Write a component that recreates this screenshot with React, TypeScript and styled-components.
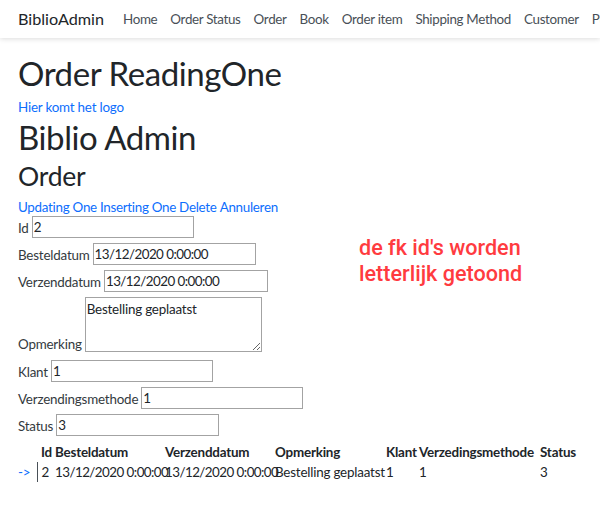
import styled, { createGlobalStyle } from 'styled-components';

const GlobalStyle = createGlobalStyle`
  html, body {
    margin: 0;
    padding: 0;
    width: 600px;
    height: 508px;
    overflow: hidden;
    background: #fff;
  }
  body {
    font-family: Lato, 'Noto Sans', sans-serif;
    font-size: 13.4px;
    letter-spacing: -0.2px;
    line-height: 20px;
    color: #212529;
  }
`;

const navLinks = ['Home', 'Order Status', 'Order', 'Book', 'Order item', 'Shipping Method', 'Customer', 'Publisher'];

const fields = [
  { label: 'Id', value: '2', width: 162, date: false },
  { label: 'Besteldatum', value: '13/12/2020 0:00:00', width: 163, date: true },
  { label: 'Verzenddatum', value: '13/12/2020 0:00:00', width: 164, date: true },
];

const lowerFields = [
  { label: 'Klant', value: '1', width: 162 },
  { label: 'Verzendingsmethode', value: '1', width: 162 },
  { label: 'Status', value: '3', width: 163 },
];

const headers = ['Besteldatum', 'Verzenddatum', 'Opmerking', 'Klant', 'Verzedingsmethode', 'Status'];
const widths = [19, 18, 110, 110, 111, 33, 121, 60];

export default function App() {
  return (
    <>
      <GlobalStyle />
      <NavBar>
        <Brand>BiblioAdmin</Brand>
        <NavList>
          {navLinks.map((link) => (
            <NavLink key={link}>{link}</NavLink>
          ))}
        </NavList>
      </NavBar>
      <Main>
        <PageTitle>Order ReadingOne</PageTitle>
        <LinkText>Hier komt het logo</LinkText>
        <AppTitle>Biblio Admin</AppTitle>
        <SubTitle>Order</SubTitle>
        <Actions>
          <LinkText>Updating One</LinkText>
          <LinkText>Inserting One</LinkText>
          <LinkText>Delete</LinkText>
          <LinkText>Annuleren</LinkText>
        </Actions>
        <Form>
          {fields.map((f) => (
            <Row key={f.label}>
              <FieldLabel>{f.label}</FieldLabel>
              <Input $width={f.width} $date={f.date} readOnly value={f.value} />
            </Row>
          ))}
          <AreaRow>
            <AreaLabel>Opmerking</AreaLabel>
            <Area readOnly value="Bestelling geplaatst" />
          </AreaRow>
          {lowerFields.map((f) => (
            <Row key={f.label}>
              <FieldLabel>{f.label}</FieldLabel>
              <Input $width={f.width} $date={false} readOnly value={f.value} />
            </Row>
          ))}
        </Form>
        <Table>
          <colgroup>
            {widths.map((w, i) => (
              <col key={i} width={w} />
            ))}
          </colgroup>
          <thead>
            <tr>
              <th />
              <IdHead>Id</IdHead>
              {headers.map((h) => (
                <th key={h}>{h}</th>
              ))}
            </tr>
          </thead>
          <tbody>
            <tr>
              <td><LinkText>-&gt;</LinkText></td>
              <IdCell>2</IdCell>
              <DateCell>13/12/2020 0:00:00</DateCell>
              <DateCell>13/12/2020 0:00:00</DateCell>
              <td>Bestelling geplaatst</td>
              <td>1</td>
              <td>1</td>
              <td>3</td>
            </tr>
          </tbody>
        </Table>
      </Main>
      <Note>
        de fk id's worden
        <br />
        letterlijk getoond
      </Note>
    </>
  );
}

const NavBar = styled.nav`
  height: 38px;
  display: flex;
  align-items: center;
  padding-left: 18px;
  background: #fff;
  box-shadow: 0 1px 5px rgba(0, 0, 0, 0.14);
  white-space: nowrap;
  overflow-x: clip;
  overflow-y: visible;
`;

const Brand = styled.a`
  font-size: 16.2px;
  letter-spacing: 0;
  color: #212529;
  margin-right: 19px;
`;

const NavList = styled.div`
  display: flex;
  gap: 13px;
`;

const NavLink = styled.a`
  color: #495057;
  letter-spacing: -0.33px;
`;

const Main = styled.main`
  padding: 0 18px;
`;

const PageTitle = styled.h1`
  margin: 15px 0 4px;
  font-size: 33px;
  letter-spacing: -0.42px;
  font-weight: 400;
  line-height: 40px;
`;

const AppTitle = styled.h1`
  margin: 0;
  font-size: 33px;
  letter-spacing: -0.42px;
  font-weight: 400;
  line-height: 40px;
`;

const SubTitle = styled.h2`
  margin: 3px 0 5px;
  font-size: 26.5px;
  letter-spacing: -0.2px;
  font-weight: 400;
  line-height: 32px;
`;

const LinkText = styled.a`
  color: #0d6efd;
`;

const Actions = styled.div`
  display: flex;
  gap: 3px;
  height: 20px;
  letter-spacing: -0.28px;
`;

const Form = styled.div`
  display: flex;
  flex-direction: column;
  gap: 5px;
  margin-top: -1px;
`;

const Row = styled.div`
  display: flex;
  align-items: flex-end;
  gap: 3px;
`;

const FieldLabel = styled.span`
  color: #343a40;
`;

const AreaRow = styled(Row)`
  margin-bottom: 3px;
`;

const AreaLabel = styled(FieldLabel)`
  margin-bottom: -2px;
`;

const Input = styled.input<{ $width: number; $date: boolean }>`
  box-sizing: border-box;
  width: ${(p) => p.$width}px;
  height: 22px;
  padding: 0 1px;
  border: 1px solid #a3a3a3;
  font: inherit;
  letter-spacing: ${(p) => (p.$date ? '-0.55px' : 'inherit')};
  color: #212529;
  outline: none;
`;

const Area = styled.textarea`
  box-sizing: border-box;
  width: 177px;
  height: 55px;
  padding: 1px;
  border: 1px solid #a3a3a3;
  font: inherit;
  letter-spacing: inherit;
  color: #212529;
  outline: none;
`;

const Table = styled.table`
  margin-top: 6px;
  border-collapse: collapse;
  table-layout: fixed;
  width: 582px;
  td, th {
    padding: 0;
    height: 20px;
    white-space: nowrap;
    text-align: left;
  }
`;

const IdHead = styled.th`
  padding-left: 4px !important;
`;

const IdCell = styled.td`
  border-left: 1px solid #495057;
  padding-left: 4px !important;
`;

const DateCell = styled.td`
  letter-spacing: -0.55px;
`;

const Note = styled.div`
  position: absolute;
  left: 359px;
  top: 235px;
  font-family: Roboto, sans-serif;
  font-size: 21.6px;
  letter-spacing: 0;
  font-weight: 500;
  line-height: 26px;
  color: #ff3b3f;
`;
